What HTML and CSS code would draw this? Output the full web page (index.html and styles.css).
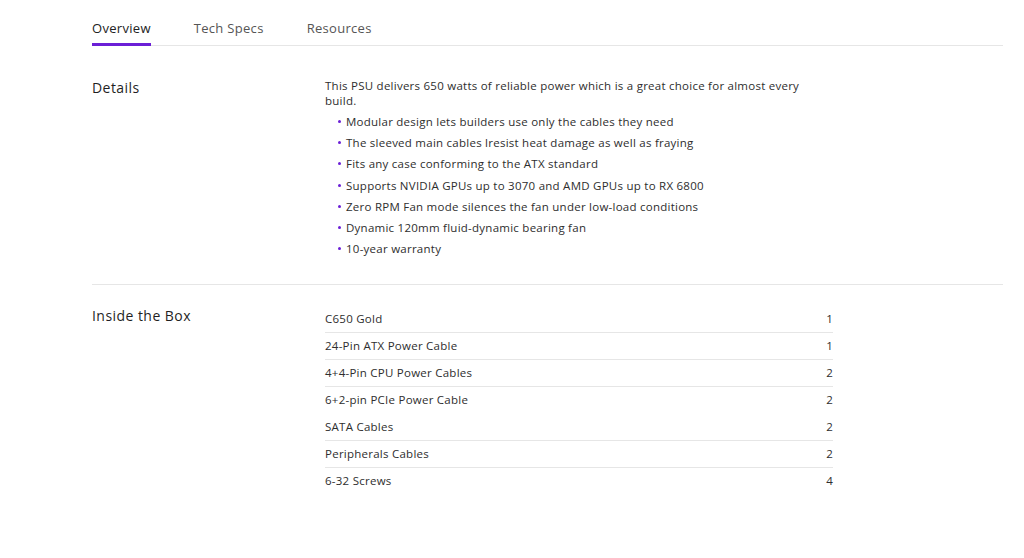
FILE: index.html
```html
<!DOCTYPE html>
<html lang="en">
<head>
  <meta charset="UTF-8" />
  <meta name="viewport" content="width=device-width, initial-scale=1" />
  <title>C650 Gold - Overview</title>
  <link rel="stylesheet" href="styles.css">
</head>
<body>

<main class="page">
  <nav class="tabs">
    <a href="#" class="tab active">Overview</a>
    <a href="#" class="tab">Tech Specs</a>
    <a href="#" class="tab">Resources</a>
  </nav>

  <section class="block">
    <h2>Details</h2>
    <div class="content">
      <p>This PSU delivers 650 watts of reliable power which is a great choice for almost every build.</p>
      <ul class="features">
        <li>Modular design lets builders use only the cables they need</li>
        <li>The sleeved main cables lresist heat damage as well as fraying</li>
        <li>Fits any case conforming to the ATX standard</li>
        <li>Supports NVIDIA GPUs up to 3070 and AMD GPUs up to RX 6800</li>
        <li>Zero RPM Fan mode silences the fan under low-load conditions</li>
        <li>Dynamic 120mm fluid-dynamic bearing fan</li>
        <li>10-year warranty</li>
      </ul>
    </div>
  </section>

  <section class="block box">
    <h2>Inside the Box</h2>
    <div class="content">
      <div class="row"><span>C650 Gold</span><span>1</span></div>
      <div class="row"><span>24-Pin ATX Power Cable</span><span>1</span></div>
      <div class="row"><span>4+4-Pin CPU Power Cables</span><span>2</span></div>
      <div class="row no-line"><span>6+2-pin PCIe Power Cable</span><span>2</span></div>
      <div class="row"><span>SATA Cables</span><span>2</span></div>
      <div class="row"><span>Peripherals Cables</span><span>2</span></div>
      <div class="row last"><span>6-32 Screws</span><span>4</span></div>
    </div>
  </section>
</main>

</body>
</html>
```

FILE: styles.css
```css
body {
  font-family: 'Open Sans', sans-serif;
  background-color: #fff;
  color: #333;
  margin: 0;
  padding: 0;
}

.page {
  width: 911px;
  margin-left: 92px;
}

.tabs {
  display: flex;
  gap: 43px;
  padding-top: 19px;
  border-bottom: 1px solid #e6e6e6;
}

.tab {
  font-size: 13px;
  letter-spacing: 0.3px;
  color: #555;
  text-decoration: none;
  padding-bottom: 6px;
  border-bottom: 3px solid transparent;
  margin-bottom: -1px;
}

.tab.active {
  color: #222;
  border-bottom-color: #6b1fd6;
}

.block {
  display: flex;
  padding: 32px 0 25px;
  border-bottom: 1px solid #e6e6e6;
}

.block h2 {
  width: 233px;
  margin: 0;
  font-size: 14px;
  font-weight: 500;
  letter-spacing: 0.45px;
  color: #1f1f1f;
  line-height: 20px;
}

.content {
  width: 508px;
  font-size: 11.5px;
  letter-spacing: 0.25px;
  color: #2e2e2e;
}

.content p {
  margin: 0 0 3px;
  line-height: 15px;
}

.features {
  list-style: none;
  margin: 0;
  padding: 0 0 0 13px;
}

.features li {
  line-height: 21.2px;
  position: relative;
  padding-left: 8px;
}

.features li::before {
  content: "";
  position: absolute;
  left: 0;
  top: 9px;
  width: 3px;
  height: 3px;
  border-radius: 50%;
  background: #6b1fd6;
}

.box {
  border-bottom: none;
  padding-top: 21px;
}

.row {
  display: flex;
  justify-content: space-between;
  height: 26px;
  line-height: 26px;
  border-bottom: 1px solid #e6e6e6;
}

.row.no-line,
.row.last {
  border-bottom-color: transparent;
}
```
